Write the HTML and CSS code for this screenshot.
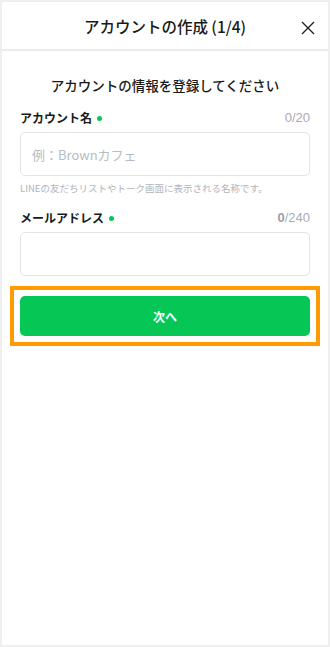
FILE: index.html
```html
<!DOCTYPE html>
<html lang="ja">
<head>
<meta charset="utf-8">
<link rel="stylesheet" href="styles.css">
</head>
<body>
<div class="frame">
  <header class="header">
    <h1 class="title">アカウントの作成 (1/4)</h1>
    <button class="close" aria-label="閉じる">
      <svg width="14" height="14" viewBox="0 0 14 14"><path d="M1 1L13 13M13 1L1 13" stroke="#222" stroke-width="1.4" fill="none"/></svg>
    </button>
  </header>
  <main class="content">
    <h2 class="subtitle">アカウントの情報を登録してください</h2>
    <div class="field">
      <div class="label-row">
        <span class="label">アカウント名<span class="dot"></span></span>
        <span class="count">0/20</span>
      </div>
      <div class="input"><span class="placeholder">例：Brownカフェ</span></div>
      <p class="help">LINEの友だちリストやトーク画面に表示される名称です。</p>
    </div>
    <div class="field field-email">
      <div class="label-row">
        <span class="label">メールアドレス<span class="dot"></span></span>
        <span class="count"><span class="count-num">0</span>/240</span>
      </div>
      <div class="input"></div>
    </div>
    <div class="cta-wrap">
      <button class="cta">次へ</button>
    </div>
  </main>
</div>
</body>
</html>
```
FILE: styles.css
```css
* { box-sizing: border-box; }
html, body { margin: 0; padding: 0; }
body {
  background: #efefef;
  font-family: "Noto Sans CJK JP", sans-serif;
  color: #111;
}
.frame {
  width: 330px;
  height: 647px;
  padding: 2px;
  display: flex;
  flex-direction: column;
}
.header {
  background: #fff;
  display: flex;
  align-items: center;
  justify-content: center;
  position: relative;
  border-bottom: 2px solid #e8ebef;
  height: 49px;
}
.title {
  margin: 0;
  font-size: 15.5px;
  font-weight: 500;
  line-height: 20px;
  color: #1a1a1a;
}
.close {
  position: absolute;
  right: 12px;
  top: 18px;
  width: 16px;
  height: 16px;
  padding: 1px;
  border: 0;
  background: none;
  display: flex;
}
.content {
  flex: 1;
  background: #fff;
  padding: 24px 8px 0;
  display: flex;
  flex-direction: column;
}
.subtitle {
  margin: 0;
  text-align: center;
  font-size: 13.5px;
  font-weight: 500;
  line-height: 20px;
  color: #1a1a1a;
}
.field {
  padding: 0 10px;
  margin-top: 13px;
}
.label-row {
  display: flex;
  justify-content: space-between;
  align-items: center;
  height: 18px;
}
.label {
  font-size: 12px;
  font-weight: 700;
  display: flex;
  align-items: center;
  color: #1a1a1a;
}
.dot {
  width: 5px;
  height: 5px;
  border-radius: 50%;
  background: #06c755;
  margin-left: 5px;
  margin-top: 3px;
}
.count {
  font-family: "Liberation Sans", "Noto Sans CJK JP", sans-serif;
  font-size: 13px;
  color: #a8adb4;
}
.count-num { font-weight: 700; color: #9aa0a8; }
.input {
  margin-top: 6px;
  height: 44px;
  border: 1px solid #e2e4e7;
  border-radius: 5px;
  display: flex;
  align-items: center;
  padding-left: 11px;
}
.placeholder {
  font-size: 13px;
  color: #b7bcc3;
}
.help {
  margin: 5px 0 0;
  font-size: 9.5px;
  line-height: 14px;
  color: #b0b5bc;
}
.field-email { margin-top: 13px; }
.cta-wrap {
  margin-top: 10px;
  border: 4px solid #ff9a00;
  padding: 6px;
}
.cta {
  width: 100%;
  height: 40px;
  border: 0;
  border-radius: 5px;
  background: #06c755;
  color: #fff;
  font-family: inherit;
  font-size: 12px;
  font-weight: 700;
  display: flex;
  align-items: center;
  justify-content: center;
}
```
